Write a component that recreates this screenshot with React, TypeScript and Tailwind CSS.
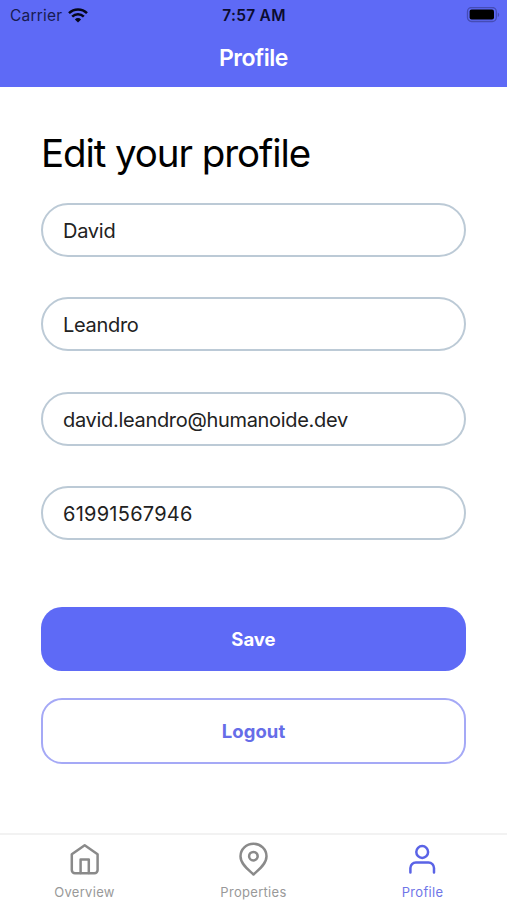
import React from 'react';

const fields = [
  { name: 'firstName', value: 'David', spacing: 'tracking-[-0.25px]' },
  { name: 'lastName', value: 'Leandro', spacing: 'tracking-[-0.3px]' },
  { name: 'email', value: 'david.leandro@humanoide.dev', spacing: 'tracking-[-0.31px]' },
  { name: 'phone', value: '61991567946', spacing: 'tracking-[0.25px]' },
];

const HomeIcon: React.FC = () => (
  <svg width="34" height="36" viewBox="0 0 34 36" fill="none" stroke="currentColor" strokeWidth="2.5" strokeLinecap="round" strokeLinejoin="round">
    <path d="M3.8 13.2 16.7 4.200l12.900 9V29a3.200 3.200 0 0 1-3.200 3.200H7A3.200 3.200 0 0 1 3.800 29Z" />
    <path d="M12.6 32V18.4h8.200V32" />
  </svg>
);

const PinIcon: React.FC = () => (
  <svg width="34" height="36" viewBox="0 0 34 36" fill="none" stroke="currentColor" strokeWidth="2.5" strokeLinecap="round" strokeLinejoin="round">
    <path d="M29.500 15.200c0 8.200-8.900 14.400-13 18.300-4.100-3.900-13-10.100-13-18.300a13 12.500 0 0 1 26 0Z" />
    <circle cx="16.400" cy="15.200" r="4.300" />
  </svg>
);

const UserIcon: React.FC = () => (
  <svg width="34" height="36" viewBox="0 0 34 36" fill="none" stroke="currentColor" strokeWidth="2.5" strokeLinecap="round" strokeLinejoin="round">
    <circle cx="16.200" cy="11" r="5.900" />
    <path d="M4.400 31.500V27a5.500 5.500 0 0 1 5.500-5.500h12.600a5.500 5.500 0 0 1 5.500 5.500v4.500" />
  </svg>
);

const tabs = [
  { label: 'Overview', Icon: HomeIcon, active: false },
  { label: 'Properties', Icon: PinIcon, active: false },
  { label: 'Profile', Icon: UserIcon, active: true },
];

const StatusBar: React.FC = () => (
  <div className="grid h-[30px] grid-cols-3 items-center pl-[10px] pr-[7px]">
    <div className="flex items-center gap-[6px] text-[#171a50]">
      <span className="pt-[2px] text-[15.5px] tracking-[0.2px]">Carrier</span>
      <svg width="20" height="15" viewBox="0 0 20 15" fill="none" stroke="#05061a" strokeWidth="2.5">
        <path d="M1 5.200a12.800 12.800 0 0 1 18 0" />
        <path d="M4.200 8.700a8.300 8.300 0 0 1 11.600 0" />
        <path d="M10 14.500 6.900 11.400a4.400 4.400 0 0 1 6.200 0Z" fill="#05061a" stroke="none" />
      </svg>
    </div>
    <span className="pt-[2px] pr-[2px] text-center text-[15.5px] font-semibold tracking-[0.3px] text-[#0b0c30]">7:57 AM</span>
    <svg className="justify-self-end" width="34" height="17" viewBox="0 0 34 17" fill="none">
      <rect x="1.500" y="0.500" width="28.800" height="14" rx="4" stroke="#454cb5" strokeWidth="1.300" />
      <rect x="3.600" y="2.600" width="24.400" height="9.800" rx="2" fill="#000" />
      <path d="M31.800 5.500v4.600c1.900-.9 1.900-3.700 0-4.600Z" fill="#454cb5" />
    </svg>
  </div>
);

const Profile: React.FC = () => {
  return (
    <div className="flex h-[900px] w-[507px] flex-col overflow-hidden bg-white font-['Inter','Liberation_Sans',sans-serif]">
      {/* Header */}
      <header className="h-[87px] shrink-0 bg-[#5e6af6]">
        <StatusBar />
        <h1 className="text-center text-[23px] leading-[56px] font-semibold tracking-[-0.45px] text-white">Profile</h1>
      </header>

      {/* Form */}
      <main className="flex-1 px-[41px] pt-[42px]">
        <h2 className="text-[38.5px] leading-[48px] tracking-[-1.08px] text-black">Edit your profile</h2>
        <form className="mt-[26px]">
          <div className="flex flex-col gap-[40.3px]">
            {fields.map((field) => (
              <input
                key={field.name}
                name={field.name}
                defaultValue={field.value}
                className={`h-[54px] w-full rounded-full border-2 border-[#bccad6] px-5 pt-[2px] text-[20px] text-[#222] outline-none ${field.spacing}`}
              />
            ))}
          </div>
          <button type="button" className="mt-[67.5px] h-[63.5px] w-full rounded-[21px] bg-[#5e6af6] pt-px text-[18.5px] font-bold text-white">
            Save
          </button>
          <button type="button" className="mt-[27px] h-[66px] w-full rounded-[21px] border-2 border-[#a5a9f6] pt-px text-[18.5px] font-bold tracking-[0.1px] text-[#666de8]">
            Logout
          </button>
        </form>
      </main>

      {/* Tab bar */}
      <nav className="grid h-[67px] shrink-0 grid-cols-3 border-t-2 border-[#f2f2f2]">
        {tabs.map(({ label, Icon, active }) => (
          <a key={label} className={`flex flex-col items-center pt-[6px] ${active ? 'text-[#5a63e6]' : 'text-[#8a8a8a]'}`}>
            <Icon />
            <span className={`mt-[6px] text-[13px] leading-[18px] tracking-[0.3px] ${active ? 'text-[#6f76e8]' : 'text-[#999]'}`}>{label}</span>
          </a>
        ))}
      </nav>
    </div>
  );
};

export default Profile;
